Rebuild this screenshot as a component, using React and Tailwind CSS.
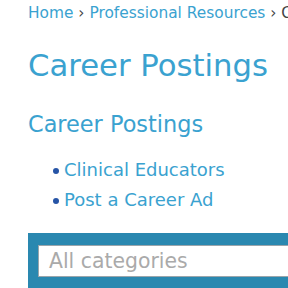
export default function App() {
  const font = { fontFamily: '"DejaVu Sans", Verdana, sans-serif' };
  return (
    <div className="w-[288px] h-[288px] overflow-hidden bg-white" style={font}>
      <div className="pl-[28px]">
        <div className="pt-[1px] text-[15.4px] leading-[24px] whitespace-nowrap text-[#3aa2d0]">
          <span>Home</span>
          <span className="text-[#444]"> › </span>
          <span>Professional Resources</span>
          <span className="text-[#444]"> › Career Postings</span>
        </div>
        <h1 className="mt-[23px] text-[30.7px] leading-[36px] text-[#3aa2d0] whitespace-nowrap">
          Career Postings
        </h1>
        <h2 className="mt-[26px] text-[22.4px] leading-[28px] text-[#3aa2d0] whitespace-nowrap">
          Career Postings
        </h2>
        <ul className="mt-[17px] pl-[25px] text-[18px] leading-[30px] whitespace-nowrap">
          <li>
            <span className="inline-block w-[6px] h-[6px] rounded-full bg-[#2654a6] mr-[5px] align-middle"></span>
            <span className="text-[#3aa2d0]">Clinical Educators</span>
          </li>
          <li>
            <span className="inline-block w-[6px] h-[6px] rounded-full bg-[#2654a6] mr-[5px] align-middle"></span>
            <span className="text-[#3aa2d0]">Post a Career Ad</span>
          </li>
        </ul>
        <div className="mt-[18px] w-[320px] bg-[#2a88b0] pl-[10px] pt-[12px] pb-[20px]">
          <div className="h-[32px] bg-white border border-[#9aa5ab] flex items-center pl-[10px] text-[20.4px] text-[#aaaaaa] whitespace-nowrap">
            All categories
          </div>
        </div>
      </div>
    </div>
  );
}
